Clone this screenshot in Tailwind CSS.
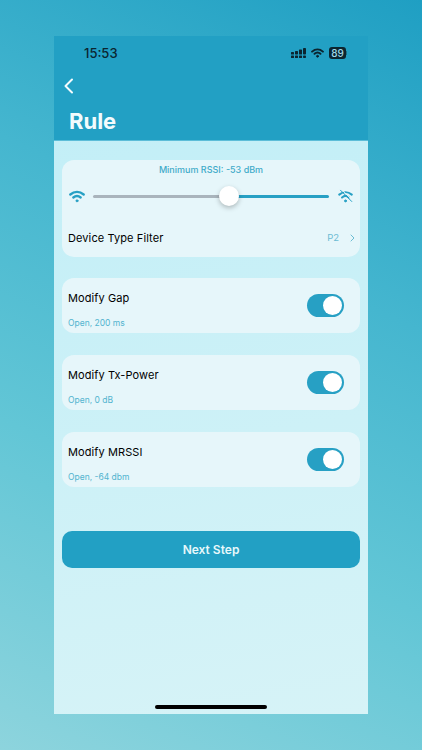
<!DOCTYPE html>
<html><head><meta charset="utf-8"><script src="https://cdn.jsdelivr.net/npm/@tailwindcss/browser@4"></script></head>
<body class="m-0">
<div class="w-[422px] h-[750px] overflow-hidden pt-[36px] pl-[54px] font-['Inter',sans-serif] bg-[linear-gradient(205deg,#1f9fc3_0%,#45b6cf_35%,#62c6d6_65%,#8dd4dd_100%)]">
  <div class="w-[314px] h-[678px] flex flex-col bg-[linear-gradient(170deg,#c0eef7_0%,#d6f3f7_100%)]">
    <header class="h-[105px] bg-[#22a0c4] flex flex-col border-b border-[#5cbdd8]">
      <div class="h-[36px] flex items-center justify-between pl-[30px] pr-[21px] pb-[2px]">
        <span class="text-[13px] font-medium text-[#0b2530] leading-none">15:53</span>
        <div class="flex items-center gap-[5px]">
          <svg width="15" height="10" viewBox="0 0 15 10" fill="#0b2530"><rect x="0" y="4" width="3" height="2.6" rx=".6"/><rect x="0" y="7.4" width="3" height="2.6" rx=".6"/><rect x="4" y="3" width="3" height="3.4" rx=".6"/><rect x="4" y="7.4" width="3" height="2.6" rx=".6"/><rect x="8" y="1.5" width="3" height="5" rx=".6"/><rect x="8" y="7.4" width="3" height="2.6" rx=".6"/><rect x="12" y="0" width="3" height="6.6" rx=".8"/><rect x="12" y="7.4" width="3" height="2.6" rx=".8"/></svg>
          <svg width="13" height="10" viewBox="0 0 24 18" fill="none" stroke="#0b2530" stroke-width="3.6" stroke-linecap="round"><path d="M2 6.5C8 1 16 1 22 6.5"/><path d="M6.5 10.5C10 7.5 14 7.5 17.5 10.5"/><circle cx="12" cy="15" r="1.8" fill="#0b2530" stroke-width="1.6"/></svg>
          <div class="flex items-center">
            <span class="w-[17px] h-[12px] rounded-[3px] bg-[#0b2530] text-[10px] leading-[12px] font-medium text-[#9fd8e8] text-center">89</span>
            <span class="w-[1px] h-[4px] bg-[#0b2530]/40"></span>
          </div>
        </div>
      </div>
      <div class="h-[28px] pl-[9px] flex items-center">
        <svg width="12" height="16" viewBox="0 0 12 16" fill="none" stroke="#f4fbfd" stroke-width="2" stroke-linecap="round" stroke-linejoin="round"><path d="M9 1.5 2.5 8 9 14.5"/></svg>
      </div>
      <h1 class="pl-[15px] text-[22px] leading-[28px] mt-[7px] font-bold text-[#f2fbfd]">Rule</h1>
    </header>
    <main class="flex flex-col px-[8px] pt-[19px]">
      <section class="h-[97px] rounded-[12px] bg-[#e6f6fa] flex flex-col">
        <p class="text-[9px] leading-[12px] mt-[4px] font-medium text-[#3fabc9] text-center">Minimum RSSI: -53 dBm</p>
        <div class="flex items-center h-[20px] mt-[10px] pl-[7px]">
          <svg width="16" height="13" viewBox="0 0 24 18" fill="none" stroke="#27a0c4" stroke-width="3.6" stroke-linecap="round"><path d="M2 6C8 1 16 1 22 6"/><path d="M6.5 10.5C10 7.5 14 7.5 17.5 10.5"/><circle cx="12" cy="15.5" r="1.5" fill="#27a0c4" stroke-width="1.5"/></svg>
          <div class="relative w-[236px] ml-[8px] mr-[9px] flex items-center h-[3px] rounded-full">
            <div class="w-[136px] h-[3px] rounded-l-full bg-[#a9b4bc]"></div>
            <div class="flex-1 h-[3px] rounded-r-full bg-[#27a0c4]"></div>
            <div class="absolute left-[126px] top-[-8.5px] w-[20px] h-[20px] rounded-full bg-white shadow-[0_2px_5px_rgba(0,0,0,0.25)]"></div>
          </div>
          <svg width="15" height="15" viewBox="0 0 24 24" fill="none" stroke="#27a0c4" stroke-width="3.4" stroke-linecap="round"><path d="M2 9C8 4 16 4 22 9"/><path d="M6.5 13.5C10 10.5 14 10.5 17.5 13.5"/><circle cx="12" cy="19" r="1.6" fill="#27a0c4" stroke-width="1.5"/><path d="M4 2 22 20" stroke-width="1.6" stroke="#e6f6fa" transform="translate(1.5 -1.5)"/><path d="M4 2 22 20" stroke-width="1.6"/></svg>
        </div>
        <div class="flex items-center justify-between mt-[25px] pl-[6px] pr-[5px]">
          <span class="text-[11px] leading-[14px] font-normal tracking-[0.1px] text-black">Device Type Filter</span>
          <div class="flex items-center gap-[11px]">
            <span class="text-[9.5px] text-[#6cbcd3]">P2</span>
            <svg width="5" height="8" viewBox="0 0 5 8" fill="none" stroke="#6cbcd3" stroke-width="1" stroke-linecap="round" stroke-linejoin="round"><path d="M1 1l3 3-3 3"/></svg>
          </div>
        </div>
      </section>

      <section class="mt-[21px] h-[55px] rounded-[12px] bg-[#e6f6fa] flex items-center justify-between pl-[6px] pr-[16px]">
        <div class="flex flex-col self-start pt-[13px]">
          <span class="text-[11px] leading-[14px] font-normal tracking-[0.1px] text-black">Modify Gap</span>
          <span class="text-[8.5px] leading-[12px] mt-[12px] text-[#52b4cf]">Open, 200 ms</span>
        </div>
        <div class="w-[37px] h-[23px] rounded-full bg-[#27a0c4] flex items-center justify-end pr-[2px]"><div class="w-[19px] h-[19px] rounded-full bg-white"></div></div>
      </section>

      <section class="mt-[22px] h-[55px] rounded-[12px] bg-[#e6f6fa] flex items-center justify-between pl-[6px] pr-[16px]">
        <div class="flex flex-col self-start pt-[13px]">
          <span class="text-[11px] leading-[14px] font-normal tracking-[0.1px] text-black">Modify Tx-Power</span>
          <span class="text-[8.5px] leading-[12px] mt-[12px] text-[#52b4cf]">Open, 0 dB</span>
        </div>
        <div class="w-[37px] h-[23px] rounded-full bg-[#27a0c4] flex items-center justify-end pr-[2px]"><div class="w-[19px] h-[19px] rounded-full bg-white"></div></div>
      </section>

      <section class="mt-[22px] h-[55px] rounded-[12px] bg-[#e6f6fa] flex items-center justify-between pl-[6px] pr-[16px]">
        <div class="flex flex-col self-start pt-[13px]">
          <span class="text-[11px] leading-[14px] font-normal tracking-[0.1px] text-black">Modify MRSSI</span>
          <span class="text-[8.5px] leading-[12px] mt-[12px] text-[#52b4cf]">Open, -64 dbm</span>
        </div>
        <div class="w-[37px] h-[23px] rounded-full bg-[#27a0c4] flex items-center justify-end pr-[2px]"><div class="w-[19px] h-[19px] rounded-full bg-white"></div></div>
      </section>

      <button class="mt-[44px] h-[37px] rounded-[10px] bg-[#22a0c4] text-[12px] font-semibold text-[#e8f8fb]">Next Step</button>
    </main>
    <div class="mt-auto mb-[5px] self-center w-[112px] h-[4px] rounded-full bg-black"></div>
  </div>
</div>
</body></html>
